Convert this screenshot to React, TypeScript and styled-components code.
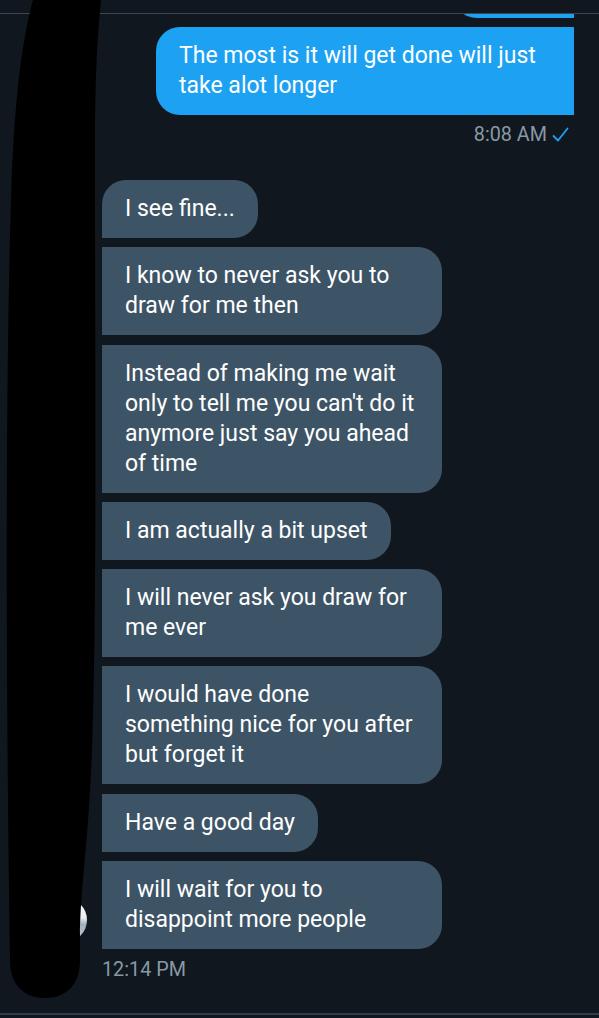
import React from "react";
import styled, { createGlobalStyle } from "styled-components";

const Global = createGlobalStyle`
  html, body { margin: 0; padding: 0; background: #10171e; }
  body { font-family: Roboto, "Noto Sans", "Liberation Sans", sans-serif; }
`;

const Page = styled.div`
  position: relative;
  width: 599px;
  height: 1018px;
  overflow: hidden;
  background: #10171e;
  display: flex;
  flex-direction: column;
`;

const Header = styled.div`
  height: 13px;
  flex: none;
  border-bottom: 1px solid #3a4856;
`;

const Thread = styled.div`
  flex: 1;
  display: flex;
  flex-direction: column;
  padding: 0 25px 0 43px;
`;

const SentGroup = styled.div`
  display: flex;
  flex-direction: column;
  align-items: flex-end;
  gap: 9px;
`;

const PrevClip = styled.div`
  height: 4px;
  overflow: hidden;
  display: flex;
  align-items: flex-end;
`;

const Bubble = styled.div<{ $sent?: boolean; $corners: string }>`
  box-sizing: border-box;
  max-width: ${(p) => (p.$sent ? "418px" : "340px")};
  padding: 14px 23px 14px 23px;
  font-size: 23px;
  line-height: 30px;
  color: #ffffff;
  background: ${(p) => (p.$sent ? "#1da1f2" : "#3d5466")};
  border-radius: ${(p) => p.$corners};
`;

const PrevBubble = styled.div`
  width: 121px;
  height: 40px;
  flex: none;
  background: #1da1f2;
  border-radius: 0 0 0 24px;
`;

const Meta = styled.div<{ $align: "left" | "right" }>`
  display: flex;
  align-items: center;
  justify-content: ${(p) => (p.$align === "right" ? "flex-end" : "flex-start")};
  gap: 5px;
  font-size: 19.8px;
  line-height: 20px;
  color: #8899a6;
  padding-right: ${(p) => (p.$align === "right" ? "5px" : "0")};
`;

const SentMeta = styled(Meta)`
  margin-top: 10px;
`;

const ReceivedMeta = styled(Meta)`
  margin-top: 11px;
  padding-left: 59px;
`;

const ReceivedGroup = styled.div`
  display: flex;
  gap: 15px;
  margin-top: 35px;
`;

const AvatarCol = styled.div`
  width: 44px;
  flex: none;
  display: flex;
  align-items: flex-end;
  padding-bottom: 7px;
`;

const Avatar = styled.div`
  width: 44px;
  height: 44px;
  border-radius: 50%;
  background: linear-gradient(180deg, #ffffff 0%, #e9eef1 45%, #9fb0bb 60%, #c9d3da 100%);
`;

const Bubbles = styled.div`
  display: flex;
  flex-direction: column;
  align-items: flex-start;
  gap: 9.3px;
`;

const Footer = styled.div`
  height: 3px;
  flex: none;
  border-top: 2px solid #2f3f4d;
`;

const Scribble = styled.svg`
  position: absolute;
  left: 0;
  top: 0;
  pointer-events: none;
`;

const Check = () => (
  <svg width="17" height="16" viewBox="0 0 17 16" fill="none">
    <path d="M1.5 9 L6 13.5 L15.5 1.5" stroke="#1da1f2" strokeWidth="1.8" strokeLinecap="round" strokeLinejoin="round" />
  </svg>
);

const R = 24;
const received: { text: string; corners: string }[] = [
  { text: "I see fine...", corners: `${R}px ${R}px ${R}px 0` },
  { text: "I know to never ask you to draw for me then", corners: `0 ${R}px ${R}px 0` },
  { text: "Instead of making me wait only to tell me you can't do it anymore just say you ahead of time", corners: `0 ${R}px ${R}px 0` },
  { text: "I am actually a bit upset", corners: `0 ${R}px ${R}px 0` },
  { text: "I will never ask you draw for me ever", corners: `0 ${R}px ${R}px 0` },
  { text: "I would have done something nice for you after but forget it", corners: `0 ${R}px ${R}px 0` },
  { text: "Have a good day", corners: `0 ${R}px ${R}px 0` },
  { text: "I will wait for you to disappoint more people", corners: `0 ${R}px ${R}px 0` },
];

export default function App() {
  return (
    <Page>
      <Global />
      <Header />
      <Thread>
        <SentGroup>
          <PrevClip>
            <PrevBubble />
          </PrevClip>
          <Bubble $sent $corners={`${R}px 0 0 ${R}px`}>
            The most is it will get done will just take alot longer
          </Bubble>
        </SentGroup>
        <SentMeta $align="right">
          <span>8:08 AM</span>
          <Check />
        </SentMeta>
        <ReceivedGroup>
          <AvatarCol>
            <Avatar />
          </AvatarCol>
          <Bubbles>
            {received.map((m, i) => (
              <Bubble key={i} $corners={m.corners}>
                {m.text}
              </Bubble>
            ))}
          </Bubbles>
        </ReceivedGroup>
        <ReceivedMeta $align="left">12:14 PM</ReceivedMeta>
      </Thread>
      <Footer />
      <Scribble width="599" height="1018" viewBox="0 0 599 1018">
        <path
          d="M33,0 L101,0 C97,40 95,80 95,150 C95,400 97,600 92,750 C88,850 81,880 80,935 L80,960 C80,985 66,998 45,998 C24,998 10,985 10,960 C6,700 5,400 11,200 C14,100 22,40 33,0 Z"
          fill="#000000"
        />
      </Scribble>
    </Page>
  );
}
